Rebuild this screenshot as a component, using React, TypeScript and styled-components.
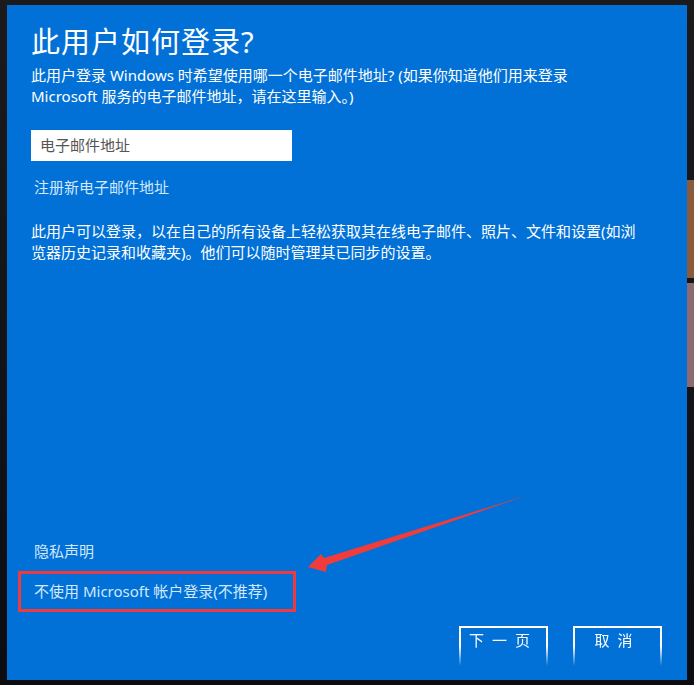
import styled, { createGlobalStyle } from 'styled-components'

const GlobalStyle = createGlobalStyle`
  html, body {
    margin: 0;
    padding: 0;
    background: #16171b;
  }
  body {
    font-family: "Noto Sans", "Noto Sans CJK SC", sans-serif;
  }
`

const Screen = styled.div`
  display: flex;
  align-items: flex-start;
  width: 694px;
  height: 685px;
  padding: 5px 0 0 7px;
  box-sizing: border-box;
  overflow: hidden;
  background: linear-gradient(180deg, #1b1b1e 0%, #111318 60%, #0b0d13 100%);
`

const Panel = styled.div`
  position: relative;
  display: flex;
  flex-direction: column;
  width: 680px;
  height: 675px;
  padding: 19px 25px 0 24px;
  box-sizing: border-box;
  background: #0171d7;
  color: #ffffff;
  flex-shrink: 0;
`

const SideStrip = styled.div`
  display: flex;
  flex-direction: column;
  width: 7px;
  padding-top: 175px;
  gap: 5px;
`

const Wallpaper = styled.div<{ $color: string; $height: number }>`
  height: ${(p) => p.$height}px;
  background: ${(p) => p.$color};
`

const Title = styled.h1`
  margin: 0;
  font-size: 29px;
  line-height: 36px;
  font-weight: 400;
  letter-spacing: 1px;
`

const Text = styled.p<{ $top: number }>`
  margin: ${(p) => p.$top}px 0 0;
  font-size: 15px;
  line-height: 21px;
  white-space: nowrap;
`

const EmailInput = styled.div`
  margin-top: 23px;
  width: 261px;
  height: 31px;
  background: #ffffff;
  color: #555555;
  font-size: 15px;
  line-height: 31px;
  padding-left: 9px;
  box-sizing: border-box;
`

const Link = styled.div<{ $top: number }>`
  margin: ${(p) => p.$top}px 0 0 3px;
  font-size: 15px;
  line-height: 20px;
  color: #d3e8fb;
`

const Highlight = styled.div`
  margin: 10px 0 0 -13px;
  width: 278px;
  height: 41px;
  border: 3px solid #f0393c;
  box-sizing: border-box;
  display: flex;
  align-items: center;
  padding: 0 0 3px 13px;
  font-size: 15px;
  color: #d3e8fb;
  white-space: nowrap;
`

const ButtonRow = styled.div`
  display: flex;
  justify-content: flex-end;
  gap: 25px;
  margin-top: 14px;
`

const Button = styled.div`
  width: 89px;
  height: 40px;
  border: 2px solid #ffffff;
  border-bottom: none;
  box-sizing: border-box;
  display: flex;
  justify-content: center;
  padding-top: 1px;
  font-size: 15px;
  letter-spacing: 8px;
  color: #ffffff;
  -webkit-mask-image: linear-gradient(180deg, #000 0%, #000 50%, transparent 100%);
  mask-image: linear-gradient(180deg, #000 0%, #000 50%, transparent 100%);
`

const Arrow = styled.svg`
  position: absolute;
  left: 0;
  top: 0;
  width: 680px;
  height: 675px;
  pointer-events: none;
`

export default function App() {
  return (
    <>
      <GlobalStyle />
      <Screen>
        <Panel>
          <Title>此用户如何登录?</Title>
          <Text $top={5}>
            此用户登录 Windows 时希望使用哪一个电子邮件地址? (如果你知道他们用来登录
            <br />
            Microsoft 服务的电子邮件地址，请在这里输入。)
          </Text>
          <EmailInput>电子邮件地址</EmailInput>
          <Link $top={16}>注册新电子邮件地址</Link>
          <Text $top={24}>
            此用户可以登录，以在自己的所有设备上轻松获取其在线电子邮件、照片、文件和设置(如浏
            <br />
            览器历史记录和收藏夹)。他们可以随时管理其已同步的设置。
          </Text>
          <Link $top={278}>隐私声明</Link>
          <Highlight>不使用 Microsoft 帐户登录(不推荐)</Highlight>
          <ButtonRow>
            <Button>下一页</Button>
            <Button>取消</Button>
          </ButtonRow>
          <Arrow viewBox="0 0 680 675">
            <polygon
              points="301,562 314,549 317,553 518,491 320,560 319,567"
              fill="#f23b3b"
            />
          </Arrow>
        </Panel>
        <SideStrip>
          <Wallpaper $color="#8a5a3c" $height={98} />
          <Wallpaper $color="#8c6a70" $height={104} />
        </SideStrip>
      </Screen>
    </>
  )
}
